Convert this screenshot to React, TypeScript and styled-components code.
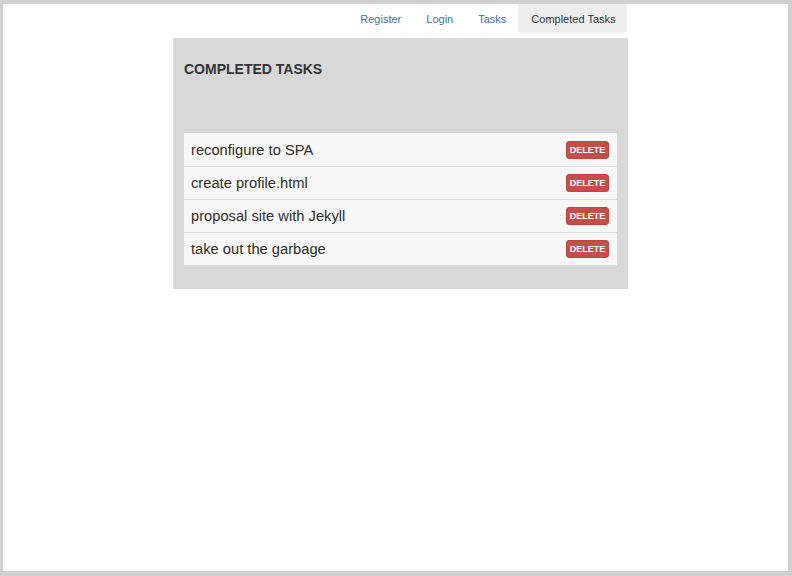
import React from "react";
import styled, { createGlobalStyle } from "styled-components";

const GlobalStyle = createGlobalStyle`
  html, body {
    margin: 0;
    padding: 0;
    background: #ffffff;
  }
  body {
    font-family: "Liberation Sans", Arial, Helvetica, sans-serif;
    color: #333333;
  }
`

const Frame = styled.div`
  box-sizing: border-box;
  width: 792px;
  height: 576px;
  border-style: solid;
  border-color: #d0d0d0;
  border-width: 4px 4px 5px 3px;
  background: #ffffff;
`

const Container = styled.div`
  width: 455px;
  margin-left: 170px;
`

const Nav = styled.ul`
  display: flex;
  justify-content: flex-end;
  list-style: none;
  margin: 0 1px 5px 0;
  padding: 0;
`

const NavItem = styled.li<{ $active?: boolean }>`
  height: 29px;
  padding: 0 11.5px 0 13.5px;
  display: flex;
  align-items: center;
  font-size: 11px;
  color: ${p => (p.$active ? "#333333" : "#3f6cb2")};
  background: ${p => (p.$active ? "#eeeeee" : "transparent")};
  border-radius: 0 0 4px 4px;
  cursor: pointer;
`

const Panel = styled.div`
  background: #d8d8d8;
  padding: 23px 11px 24px 11px;
`

const Title = styled.h2`
  margin: 0 0 56px 0;
  font-size: 14px;
  line-height: 16px;
  font-weight: bold;
  color: #333333;
`

const List = styled.ul`
  list-style: none;
  margin: 0;
  padding: 0;
  background: #f7f7f7;
`

const Item = styled.li`
  box-sizing: border-box;
  height: 33px;
  display: flex;
  align-items: center;
  justify-content: space-between;
  padding: 0 8px 0 7px;
  font-size: 14.7px;
  color: #2e2e2e;
  & + & {
    border-top: 1px solid #dddddd;
  }
`

const DeleteButton = styled.button`
  box-sizing: border-box;
  width: 43px;
  height: 18px;
  padding: 0;
  border: 1px solid #bb4541;
  border-radius: 3px;
  background: #c64d49;
  color: #ffffff;
  font-family: "Liberation Sans", Arial, sans-serif;
  font-size: 9px;
  font-weight: bold;
  cursor: pointer;
`

const links = ["Register", "Login", "Tasks", "Completed Tasks"]

const tasks = [
  "reconfigure to SPA",
  "create profile.html",
  "proposal site with Jekyll",
  "take out the garbage"
]

function App() {
  return (
    <>
      <GlobalStyle />
      <Frame>
        <Container>
          <Nav>
            {links.map(link => (
              <NavItem key={link} $active={link === "Completed Tasks"}>{link}</NavItem>
            ))}
          </Nav>
          <Panel>
            <Title>COMPLETED TASKS</Title>
            <List>
              {tasks.map(task => (
                <Item key={task}>
                  <span>{task}</span>
                  <DeleteButton>DELETE</DeleteButton>
                </Item>
              ))}
            </List>
          </Panel>
        </Container>
      </Frame>
    </>
  )
}

export default App
